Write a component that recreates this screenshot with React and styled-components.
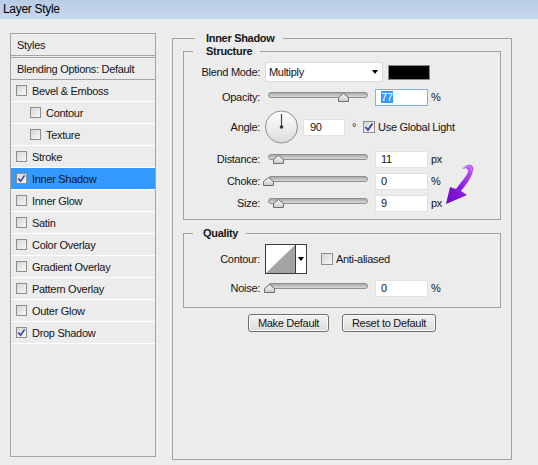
import React from "react";
import styled, { createGlobalStyle } from "styled-components";

const GlobalStyle = createGlobalStyle`
    html, body {
        margin: 0;
        padding: 0;
        background: #ececec;
    }
    body {
        font-family: "Liberation Sans", Arial, sans-serif;
        font-size: 11px;
        letter-spacing: -0.3px;
        color: #151515;
    }
`;

const Window = styled.div`
    width: 538px;
    height: 465px;
    background: #ececec;
    overflow: hidden;
`;

const TitleBar = styled.div`
    height: 19px;
    line-height: 19px;
    padding-left: 3px;
    font-size: 12px;
    color: #000;
    background: linear-gradient(#b8cce5, #c7d8ec);
`;

const Body = styled.div`
    display: flex;
    align-items: flex-start;
    padding: 13px 0 0 10px;
`;

const StylesList = styled.div`
    width: 146px;
    height: 424px;
    box-sizing: border-box;
    margin-top: 1px;
    border: 1px solid #a3a3a3;
`;

const ListItem = styled.div`
    display: flex;
    align-items: center;
    height: 21px;
    padding-left: ${props => props.$pad}px;
    background: ${props => props.$selected ? "#3399ff" : "transparent"};
    border-bottom: 1px solid ${props => props.$strong ? "#a3a3a3" : "#ffffff"};
    border-top: ${props => props.$topLine ? "1px solid #a3a3a3" : "none"};
    margin-top: ${props => props.$topLine ? 1 : 0}px;
`;

const CheckBox = styled.span`
    display: inline-flex;
    align-items: center;
    justify-content: center;
    width: ${props => props.$size}px;
    height: ${props => props.$size}px;
    box-sizing: border-box;
    border: 1px solid #8e8e8e;
    background: linear-gradient(135deg, #d6d6d6, #f7f7f7);
    margin-right: ${props => props.$gap}px;
    flex-shrink: 0;
`;

const Check = ({ checked, size = 11, gap = 5 }) =>
    <CheckBox $size={size} $gap={gap}>
        {checked &&
            <svg width={size - 2} height={size - 2} viewBox="0 0 10 10">
                <path d="M1.5 5 L4 8 L8.5 1.5" fill="none" stroke="#2d46a8" strokeWidth="1.8" />
            </svg>}
    </CheckBox>

const Main = styled.fieldset`
    position: relative;
    width: 340px;
    height: 428px;
    box-sizing: border-box;
    margin: 0 0 0 16px;
    padding: 0 10px;
    border: 1px solid #a0a0a0;
    min-width: 0;
`;

const Group = styled.fieldset`
    margin: ${props => props.$mt || 0}px 0 0 0;
    padding: 0 0 ${props => props.$pb}px 0;
    border: 1px solid #a0a0a0;
    min-width: 0;
`;

const Legend = styled.legend`
    font-weight: bold;
    line-height: 13px;
    margin-left: ${props => props.$ml}px;
    padding: 0 8px 0 ${props => props.$pl}px;
`;

const Row = styled.div`
    position: relative;
    display: flex;
    align-items: center;
    height: ${props => props.$h}px;
    margin-top: ${props => props.$mt}px;
`;

const Label = styled.span`
    width: 76px;
    margin-right: 5px;
    text-align: right;
    flex-shrink: 0;
`;

const Select = styled.div`
    display: flex;
    align-items: center;
    justify-content: space-between;
    width: 118px;
    height: 20px;
    box-sizing: border-box;
    padding: 0 4px 0 3px;
    background: #fff;
    border: 1px solid #dadada;
`;

const DropArrow = styled.span`
    width: 0;
    height: 0;
    border-left: 3.5px solid transparent;
    border-right: 3.5px solid transparent;
    border-top: 4px solid #000;
`;

const Swatch = styled.div`
    width: 42px;
    height: 15px;
    margin-left: 5px;
    box-sizing: border-box;
    background: #000;
    border: 1px solid #8a8a8a;
`;

const SliderBox = styled.div`
    position: relative;
    width: 100px;
    height: 10px;
    margin: 0 7px 0 3px;
`;

const Track = styled.div`
    height: 6px;
    box-sizing: border-box;
    border: 1px solid #8e8e8e;
    border-radius: 3px;
    background: linear-gradient(#a9a9a9, #d9d9d9);
`;

const Thumb = styled.svg`
    position: absolute;
    top: 1px;
`;

const Slider = ({ pos }) =>
    <SliderBox>
        <Track />
        <Thumb width="11" height="9" viewBox="0 0 11 9" style={{ left: pos - 5.5 }}>
            <defs>
                <linearGradient id="thumbFill" x1="0" y1="0" x2="0" y2="1">
                    <stop offset="0" stopColor="#ffffff" />
                    <stop offset="1" stopColor="#c9c9c9" />
                </linearGradient>
            </defs>
            <path d="M0.5 8.5 L0.5 4.5 L5.5 0.5 L10.5 4.5 L10.5 8.5 Z" fill="url(#thumbFill)" stroke="#6c6c6c" />
        </Thumb>
    </SliderBox>

const Field = styled.div`
    width: ${props => props.$w}px;
    height: 17px;
    box-sizing: border-box;
    padding-left: ${props => props.$pl}px;
    line-height: 15px;
    background: #fff;
    border: 1px solid ${props => props.$focus ? "#7eb4ea" : "#e1e1e1"};
`;

const Selected = styled.span`
    background: #3399ff;
    color: #fff;
`;

const Unit = styled.span`
    margin-left: ${props => props.$ml || 3}px;
`;

const SliderRow = ({ label, pos, value, unit, mt, focus }) =>
    <Row $h={18} $mt={mt}>
        <Label>{label}</Label>
        <Slider pos={pos} />
        <Field $w={53} $pl={5} $focus={focus}>
            {focus ? <Selected>{value}</Selected> : value}
        </Field>
        <Unit>{unit}</Unit>
    </Row>

const Dial = () =>
    <svg width="33" height="34" viewBox="0 0 33 34">
        <defs>
            <linearGradient id="dialFill" x1="0" y1="0" x2="0" y2="1">
                <stop offset="0" stopColor="#ffffff" />
                <stop offset="1" stopColor="#dcdcdc" />
            </linearGradient>
        </defs>
        <circle cx="16.5" cy="17" r="16" fill="url(#dialFill)" stroke="#8c8c8c" />
        <line x1="16.5" y1="17" x2="16.5" y2="4" stroke="#4a4a4a" strokeWidth="1.2" />
        <circle cx="16.5" cy="17" r="1.8" fill="#333" />
    </svg>

const ContourBox = styled.div`
    display: flex;
    height: 30px;
    box-sizing: border-box;
    border: 1px solid #3a3a3a;
    background: #fff;
`;

const ContourArrow = styled.div`
    display: flex;
    align-items: center;
    justify-content: center;
    width: 10px;
    border-left: 1px solid #3a3a3a;
`;

const CheckLabel = styled.label`
    display: flex;
    align-items: center;
    margin-left: ${props => props.$ml}px;
`;

const ButtonRow = styled.div`
    display: flex;
    justify-content: center;
    gap: 13px;
    margin-top: 6px;
`;

const Button = styled.button`
    width: ${props => props.$w}px;
    height: 18px;
    padding: 0;
    font: inherit;
    letter-spacing: inherit;
    color: #151515;
    border: 1px solid #707070;
    border-radius: 3px;
    background: linear-gradient(#f3f3f3, #dddddd);
    box-shadow: inset 0 0 0 1px #fafafa;
`;

const Pointer = styled.svg`
    position: absolute;
    left: 256px;
    top: -34px;
`;

const PurpleArrow = () =>
    <Pointer width="40" height="50" viewBox="0 0 40 50">
        <defs>
            <linearGradient id="arrowFill" x1="1" y1="0" x2="0" y2="1">
                <stop offset="0" stopColor="#c060ff" />
                <stop offset="0.5" stopColor="#8a1fe0" />
                <stop offset="1" stopColor="#6a08c0" />
            </linearGradient>
        </defs>
        <path
            d="M22 9 C27 3 35 3 33 11 C31 19 25 26 21 31 L27 35 L6 44 L10 27 L16 29 C21 22 27 16 28 12 C29 9 26 7 22 9 Z"
            fill="url(#arrowFill)"
        />
        <path d="M24 8 C28 5 33 6 31 11" fill="none" stroke="#e2b8ff" strokeWidth="1" opacity="0.7" />
    </Pointer>

const styleItems = [
    { name: "Bevel & Emboss" },
    { name: "Contour", indent: true },
    { name: "Texture", indent: true },
    { name: "Stroke" },
    { name: "Inner Shadow", checked: true, selected: true },
    { name: "Inner Glow" },
    { name: "Satin" },
    { name: "Color Overlay" },
    { name: "Gradient Overlay" },
    { name: "Pattern Overlay" },
    { name: "Outer Glow" },
    { name: "Drop Shadow", checked: true },
];

export default function App() {
    return (
        <Window>
            <GlobalStyle />
            <TitleBar>Layer Style</TitleBar>
            <Body>
                <StylesList>
                    <ListItem $pad={6} $strong>Styles</ListItem>
                    <ListItem $pad={6} $strong $topLine>Blending Options: Default</ListItem>
                    {styleItems.map(item =>
                        <ListItem key={item.name} $pad={item.indent ? 19 : 5} $selected={item.selected}>
                            <Check checked={item.checked} />
                            {item.name}
                        </ListItem>
                    )}
                </StylesList>

                <Main>
                    <Legend $ml={12} $pl={11}>Inner Shadow</Legend>

                    <Group $pb={7}>
                        <Legend $ml={9} $pl={13}>Structure</Legend>
                        <Row $h={20} $mt={4}>
                            <Label>Blend Mode:</Label>
                            <Select>Multiply<DropArrow /></Select>
                            <Swatch />
                        </Row>
                        <SliderRow label="Opacity:" pos={75} value="77" unit="%" mt={6} focus />
                        <Row $h={34} $mt={4}>
                            <Label>Angle:</Label>
                            <Dial />
                            <Field $w={42} $pl={6} style={{ marginLeft: 5 }}>90</Field>
                            <Unit $ml={7}>°</Unit>
                            <CheckLabel $ml={7}>
                                <Check checked size={12} gap={3} />
                                Use Global Light
                            </CheckLabel>
                        </Row>
                        <SliderRow label="Distance:" pos={10} value="11" unit="px" mt={6} />
                        <SliderRow label="Choke:" pos={0} value="0" unit="%" mt={4} />
                        <Row $h={18} $mt={4}>
                            <Label>Size:</Label>
                            <Slider pos={10} />
                            <Field $w={53} $pl={5}>9</Field>
                            <Unit>px</Unit>
                            <PurpleArrow />
                        </Row>
                    </Group>

                    <Group $mt={7} $pb={10}>
                        <Legend $ml={9} $pl={10}>Quality</Legend>
                        <Row $h={30} $mt={4}>
                            <Label>Contour:</Label>
                            <ContourBox>
                                <svg width="29" height="28" viewBox="0 0 29 28">
                                    <path d="M0 28 L29 0 L29 28 Z" fill="#a3a3a3" />
                                </svg>
                                <ContourArrow><DropArrow /></ContourArrow>
                            </ContourBox>
                            <CheckLabel $ml={14}>
                                <Check size={12} gap={3} />
                                Anti-aliased
                            </CheckLabel>
                        </Row>
                        <SliderRow label="Noise:" pos={1} value="0" unit="%" mt={5} />
                    </Group>

                    <ButtonRow>
                        <Button $w={81}>Make Default</Button>
                        <Button $w={94}>Reset to Default</Button>
                    </ButtonRow>
                </Main>
            </Body>
        </Window>
    );
}
